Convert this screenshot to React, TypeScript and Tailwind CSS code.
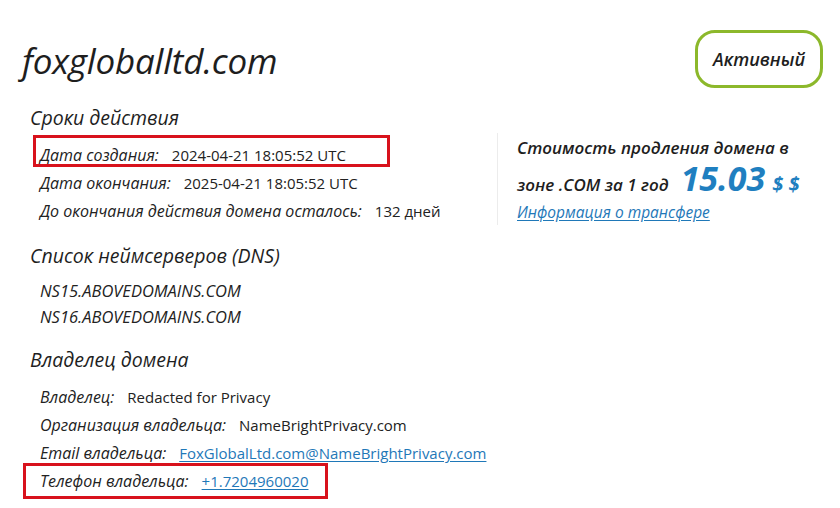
import type { ReactNode } from "react";

type Row = { label: string; value: ReactNode; mark?: "top" | "bottom" };

const terms: Row[] = [
  { label: "Дата создания:", value: "2024-04-21 18:05:52 UTC", mark: "top" },
  { label: "Дата окончания:", value: "2025-04-21 18:05:52 UTC" },
  { label: "До окончания действия домена осталось:", value: "132 дней" },
];

const owner: Row[] = [
  { label: "Владелец:", value: "Redacted for Privacy" },
  { label: "Организация владельца:", value: "NameBrightPrivacy.com" },
  {
    label: "Email владельца:",
    value: (
      <a href="#" className="text-[#1f78b8] underline underline-offset-2">
        FoxGlobalLtd.com@NameBrightPrivacy.com
      </a>
    ),
  },
  {
    label: "Телефон владельца:",
    value: (
      <a href="#" className="text-[#1f78b8] underline underline-offset-2">
        +1.7204960020
      </a>
    ),
    mark: "bottom",
  },
];

function InfoRow({ row }: { row: Row }) {
  const base = "flex items-center gap-[13px] text-[15px] text-[#222]";
  let cls = `${base} h-[28px]`;
  if (row.mark === "top") {
    cls = `${base} -mt-[6px] mb-[2px] -ml-[7px] h-[32px] w-[357px] border-[3px] border-[#d8121c] pl-[4px] pt-[8px]`;
  }
  if (row.mark === "bottom") {
    cls = `${base} -my-[4px] -ml-[17px] h-[36px] w-[305px] border-[3px] border-[#d8121c] pl-[14px]`;
  }
  return (
    <div className={cls}>
      <span className="text-[16px] italic">{row.label}</span>
      <span>{row.value}</span>
    </div>
  );
}

function Heading({ children }: { children: ReactNode }) {
  return <h2 className="h-[26px] text-[19.5px] leading-[26px] italic text-[#1e1e1e]">{children}</h2>;
}

export default function App() {
  return (
    <div className="h-[508px] w-[840px] overflow-hidden bg-white font-['Open_Sans',sans-serif] text-[#222]">
      {/* domain + status */}
      <div className="flex items-center justify-between pl-[22px] pr-[17px] pt-[30px]">
        <h1 className="mt-[4px] text-[35px] font-medium italic leading-[40px] tracking-[-0.2px] text-[#1e1e1e]">
          foxgloballtd.com
        </h1>
        <div className="flex h-[58px] w-[128px] items-center justify-center rounded-[20px] border-[3px] border-[#8cb82b] text-[18px] font-semibold italic text-[#1e1e1e]">
          Активный
        </div>
      </div>

      <div className="mt-[17px] flex pl-[30px]">
        <div className="w-[467px]">
          <Heading>Сроки действия</Heading>
          <div className="mt-[10px] pl-[10px]">
            {terms.map((r) => (
              <InfoRow key={r.label} row={r} />
            ))}
          </div>
        </div>

        {/* renewal price */}
        <div className="mt-[28px] h-[92px] border-l border-[#ececec] pl-[19px]">
          <p className="text-[17px] font-semibold italic leading-[30px] text-[#1e1e1e]">
            Стоимость продления домена в
          </p>
          <p className="flex items-baseline text-[17px] font-semibold italic leading-[30px] text-[#1e1e1e]">
            зоне .COM за 1 год
            <span className="ml-[12px] text-[34px] font-bold leading-[30px] text-[#1f7fc0]">15.03</span>
            <span className="ml-[7px] text-[20px] font-bold text-[#1f7fc0]">$ $</span>
          </p>
          <a href="#" className="block text-[15.5px] font-medium italic leading-[24px] text-[#1f78b8] underline underline-offset-2">
            Информация о трансфере
          </a>
        </div>
      </div>

      <div className="pl-[30px]">
        <div className="mt-[18px]">
          <Heading>Список неймсерверов (DNS)</Heading>
          <div className="mt-[9px] pl-[10px] text-[16.5px] italic text-[#222]">
            <div className="flex h-[26px] items-center">NS15.ABOVEDOMAINS.COM</div>
            <div className="flex h-[26px] items-center">NS16.ABOVEDOMAINS.COM</div>
          </div>
        </div>

        <div className="mt-[17px]">
          <Heading>Владелец домена</Heading>
          <div className="mt-[10px] pl-[10px]">
            {owner.map((r) => (
              <InfoRow key={r.label} row={r} />
            ))}
          </div>
        </div>
      </div>
    </div>
  );
}
